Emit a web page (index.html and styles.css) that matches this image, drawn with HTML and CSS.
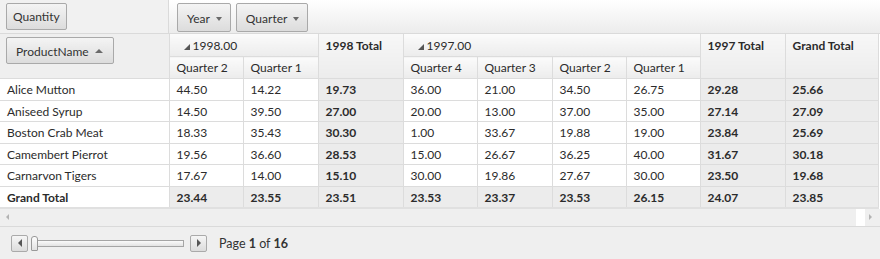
FILE: index.html
```html
<!DOCTYPE html>
<html>
<head>
<meta charset="utf-8">
<link rel="stylesheet" href="styles.css">
</head>
<body>
<div class="pivot">
  <div class="topbar">
    <div class="datazone"><span class="btn qbtn">Quantity</span></div>
    <div class="colzone">
      <span class="btn">Year <i class="dd"></i></span>
      <span class="btn">Quarter <i class="dd"></i></span>
    </div>
  </div>
  <table class="grid">
    <colgroup>
      <col style="width:169px"><col style="width:74px"><col style="width:75px"><col style="width:85px">
      <col style="width:74px"><col style="width:75px"><col style="width:74px"><col style="width:74px">
      <col style="width:85px"><col style="width:93px">
    </colgroup>
    <thead>
      <tr class="h1">
        <th rowspan="2" class="rowzone"><span class="btn pbtn">ProductName <i class="up"></i></span></th>
        <th colspan="2" class="yr"><i class="exp"></i>1998.00</th>
        <th rowspan="2" class="tot">1998 Total</th>
        <th colspan="4" class="yr"><i class="exp"></i>1997.00</th>
        <th rowspan="2" class="tot">1997 Total</th>
        <th rowspan="2" class="tot">Grand Total</th>
      </tr>
      <tr class="h2">
        <th>Quarter 2</th><th>Quarter 1</th>
        <th>Quarter 4</th><th>Quarter 3</th><th>Quarter 2</th><th>Quarter 1</th>
      </tr>
    </thead>
    <tbody>
      <tr class="ra"><td class="rh">Alice Mutton</td><td>44.50</td><td>14.22</td><td class="t">19.73</td><td>36.00</td><td>21.00</td><td>34.50</td><td>26.75</td><td class="t">29.28</td><td class="t">25.66</td></tr>
      <tr class="rb"><td class="rh">Aniseed Syrup</td><td>14.50</td><td>39.50</td><td class="t">27.00</td><td>20.00</td><td>13.00</td><td>37.00</td><td>35.00</td><td class="t">27.14</td><td class="t">27.09</td></tr>
      <tr class="ra"><td class="rh">Boston Crab Meat</td><td>18.33</td><td>35.43</td><td class="t">30.30</td><td>1.00</td><td>33.67</td><td>19.88</td><td>19.00</td><td class="t">23.84</td><td class="t">25.69</td></tr>
      <tr class="rb"><td class="rh">Camembert Pierrot</td><td>19.56</td><td>36.60</td><td class="t">28.53</td><td>15.00</td><td>26.67</td><td>36.25</td><td>40.00</td><td class="t">31.67</td><td class="t">30.18</td></tr>
      <tr class="ra"><td class="rh">Carnarvon Tigers</td><td>17.67</td><td>14.00</td><td class="t">15.10</td><td>30.00</td><td>19.86</td><td>27.67</td><td>30.00</td><td class="t">23.50</td><td class="t">19.68</td></tr>
      <tr class="rb gt"><td class="rh">Grand Total</td><td class="t">23.44</td><td class="t">23.55</td><td class="t">23.51</td><td class="t">23.53</td><td class="t">23.37</td><td class="t">23.53</td><td class="t">26.15</td><td class="t">24.07</td><td class="t">23.85</td></tr>
    </tbody>
  </table>
  <div class="hscroll">
    <i class="sl"></i>
    <span class="whiteblk"></span>
    <i class="sr"></i>
  </div>
  <div class="pager">
    <span class="pbtn-s"><i class="al"></i></span>
    <span class="slider"><span class="thumb"></span><span class="track"></span></span>
    <span class="pbtn-s"><i class="ar"></i></span>
    <span class="pinfo">Page <b>1</b> of <b>16</b></span>
  </div>
</div>
</body>
</html>
```
FILE: styles.css
```css
html, body { margin: 0; padding: 0; background: #fff; }
body { font-family: Lato, "Open Sans", sans-serif; font-size: 12px; color: #2b2b2b; }
.pivot { width: 880px; height: 259px; overflow: hidden; background: #fff; }

.topbar { display: flex; height: 33px; border-bottom: 1px solid #dadada; }
.datazone { width: 169px; border-right: 1px solid #dadada; background: #f1f1f1; padding: 3px 0 0 6px; box-sizing: border-box; }
.colzone { flex: 1; display: flex; gap: 5px; padding: 3px 0 0 8px; background: linear-gradient(#ffffff, #ececec); }

.btn { display: inline-flex; align-items: center; gap: 6px; box-sizing: border-box; height: 26px; padding: 0 7px; border: 1px solid #a9a9a9; border-radius: 2px; background: linear-gradient(#f4f4f4, #dcdcdc); color: #333; white-space: nowrap; }
.qbtn { height: 27px; padding: 0 6px 1px 6px; }
.colzone .btn { height: 29px; padding: 2px 8px 0 9px; gap: 6px; }
.dd { width: 0; height: 0; border-left: 3.5px solid transparent; border-right: 3.5px solid transparent; border-top: 4px solid #6a6a6a; }
.up { width: 0; height: 0; border-left: 4px solid transparent; border-right: 4px solid transparent; border-bottom: 4px solid #6a6a6a; }

.grid { border-collapse: collapse; table-layout: fixed; width: 878px; }
.grid th, .grid td { border: 1px solid #dcdcdc; padding: 0 0 0 7px; text-align: left; white-space: nowrap; overflow: hidden; }
.grid th { font-weight: normal; background: linear-gradient(#fbfbfb, #ececec); vertical-align: middle; }
.grid thead tr:first-child th { border-top: none; }
.grid th:first-child, .grid td:first-child { border-left: none; }
.h1 th { height: 22px; }
.h2 th { height: 21px; }
.grid th.tot { font-weight: bold; vertical-align: top; padding-top: 4px; background: linear-gradient(#f7f7f7, #ececec); }
.grid th.rowzone { vertical-align: top; padding: 3px 0 0 6px; background: #efefef; }
.pbtn { height: 27px; padding: 1px 10px 0 9px; }
.exp { display: inline-block; width: 0; height: 0; border-left: 6px solid transparent; border-bottom: 6px solid #555; margin-right: 3px; vertical-align: 0px; }
.grid th.yr { padding-left: 14px; }

.grid td { background: #fff; }
.ra td { height: 21px; }
.rb td { height: 20px; }
.grid td.t { font-weight: bold; background: #ececec; }
.gt td { font-weight: bold; border-bottom: 2px solid #e0e0e0; }
.grid td.rh { padding-left: 7px; }

.hscroll { position: relative; height: 17px; background: #efefef; border-bottom: 1px solid #dadada; }
.sl { position: absolute; left: 6px; top: 5px; width: 0; height: 0; border-top: 3.5px solid transparent; border-bottom: 3.5px solid transparent; border-right: 3.5px solid #b3b3b3; }
.sr { position: absolute; left: 869px; top: 5px; width: 0; height: 0; border-top: 3.5px solid transparent; border-bottom: 3.5px solid transparent; border-left: 3.5px solid #b3b3b3; }
.whiteblk { position: absolute; left: 856px; top: 0; width: 9px; height: 17px; background: #fff; }

.pager { display: flex; align-items: center; height: 32px; padding-left: 11px; background: #efefef; }
.pbtn-s { width: 17px; height: 17px; box-sizing: border-box; border: 1px solid #aaa; border-radius: 2px; background: linear-gradient(#f6f6f6, #dcdcdc); display: flex; align-items: center; justify-content: center; }
.al { width: 0; height: 0; border-top: 4px solid transparent; border-bottom: 4px solid transparent; border-right: 4px solid #555; }
.ar { width: 0; height: 0; border-top: 4px solid transparent; border-bottom: 4px solid transparent; border-left: 4px solid #555; }
.slider { display: flex; align-items: center; width: 153px; margin: 0 6px 0 3px; }
.thumb { width: 7px; height: 15px; border: 1px solid #999; border-radius: 3px 3px 1px 1px; background: linear-gradient(#fdfdfd, #e2e2e2); box-sizing: border-box; }
.track { flex: 1; height: 5px; border: 1px solid #a5a5a5; border-left: none; background: linear-gradient(#fafafa, #e3e3e3); }
.pinfo { margin-left: 12px; font-size: 12.5px; color: #333; }
.pinfo b { font-weight: bold; }
```
